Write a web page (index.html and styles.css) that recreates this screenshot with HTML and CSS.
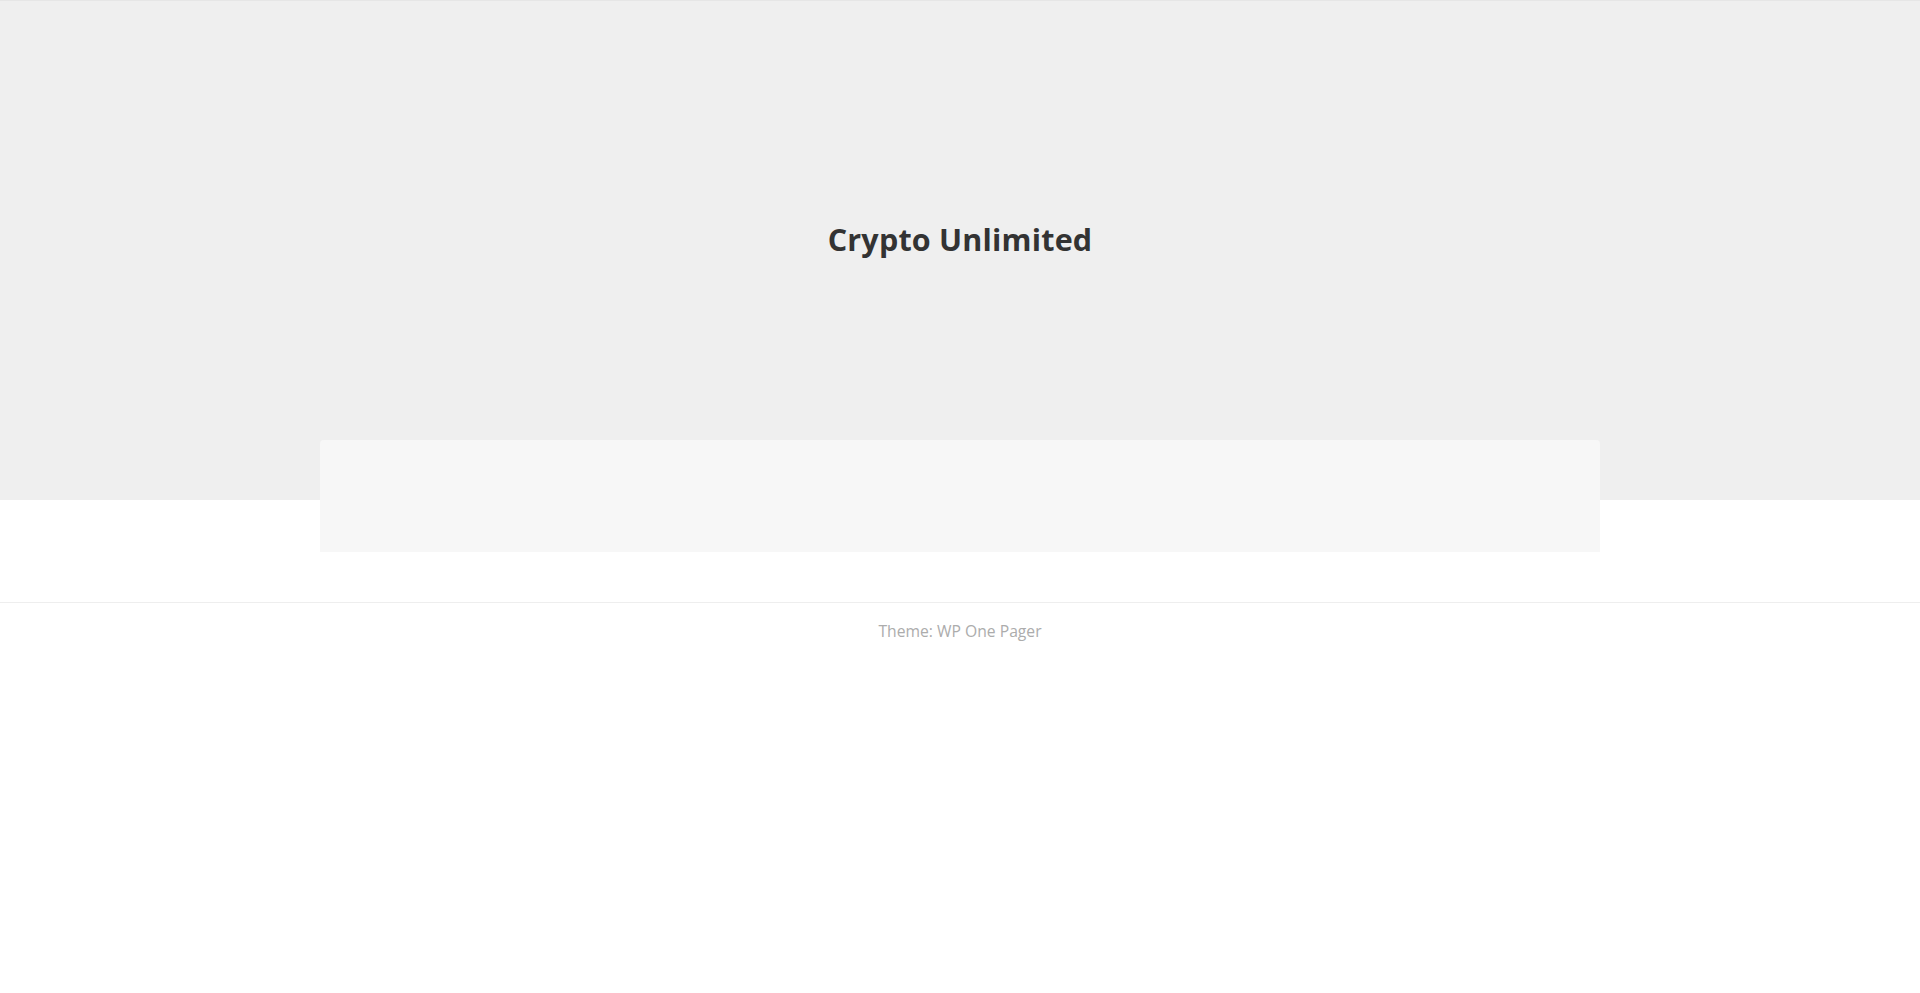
FILE: index.html
```html
<!DOCTYPE html>
<html>
<head>
<meta charset="utf-8">
<link rel="stylesheet" href="styles.css">
</head>
<body>
<header class="hero">
  <h1 class="site-title">Crypto Unlimited</h1>
</header>
<main class="content">
  <div class="card"></div>
</main>
<footer class="footer">
  <p class="credit">Theme: WP One Pager</p>
</footer>
</body>
</html>
```
FILE: styles.css
```css
html, body {
  margin: 0;
  padding: 0;
  background: #ffffff;
  font-family: "Open Sans", "Noto Sans", sans-serif;
}
.hero {
  height: 500px;
  background: #efefef;
  border-top: 1px solid #e6e6e6;
  display: flex;
  justify-content: center;
  padding-top: 212px;
  box-sizing: border-box;
}
.site-title {
  margin: 0;
  font-size: 30.5px;
  line-height: 52px;
  font-weight: 700;
  color: #333333;
  letter-spacing: 0.2px;
  height: 52px;
}
.content {
  display: flex;
  justify-content: center;
  margin-top: -60px;
  padding-bottom: 50px;
}
.card {
  width: 1280px;
  height: 112px;
  background: #f7f7f7;
  border-radius: 4px 4px 0 0;
}
.footer {
  border-top: 1px solid #eeeeee;
  text-align: center;
}
.credit {
  margin: 15px 0 0;
  font-size: 15.7px;
  line-height: 26px;
  color: #acacac;
}
```
